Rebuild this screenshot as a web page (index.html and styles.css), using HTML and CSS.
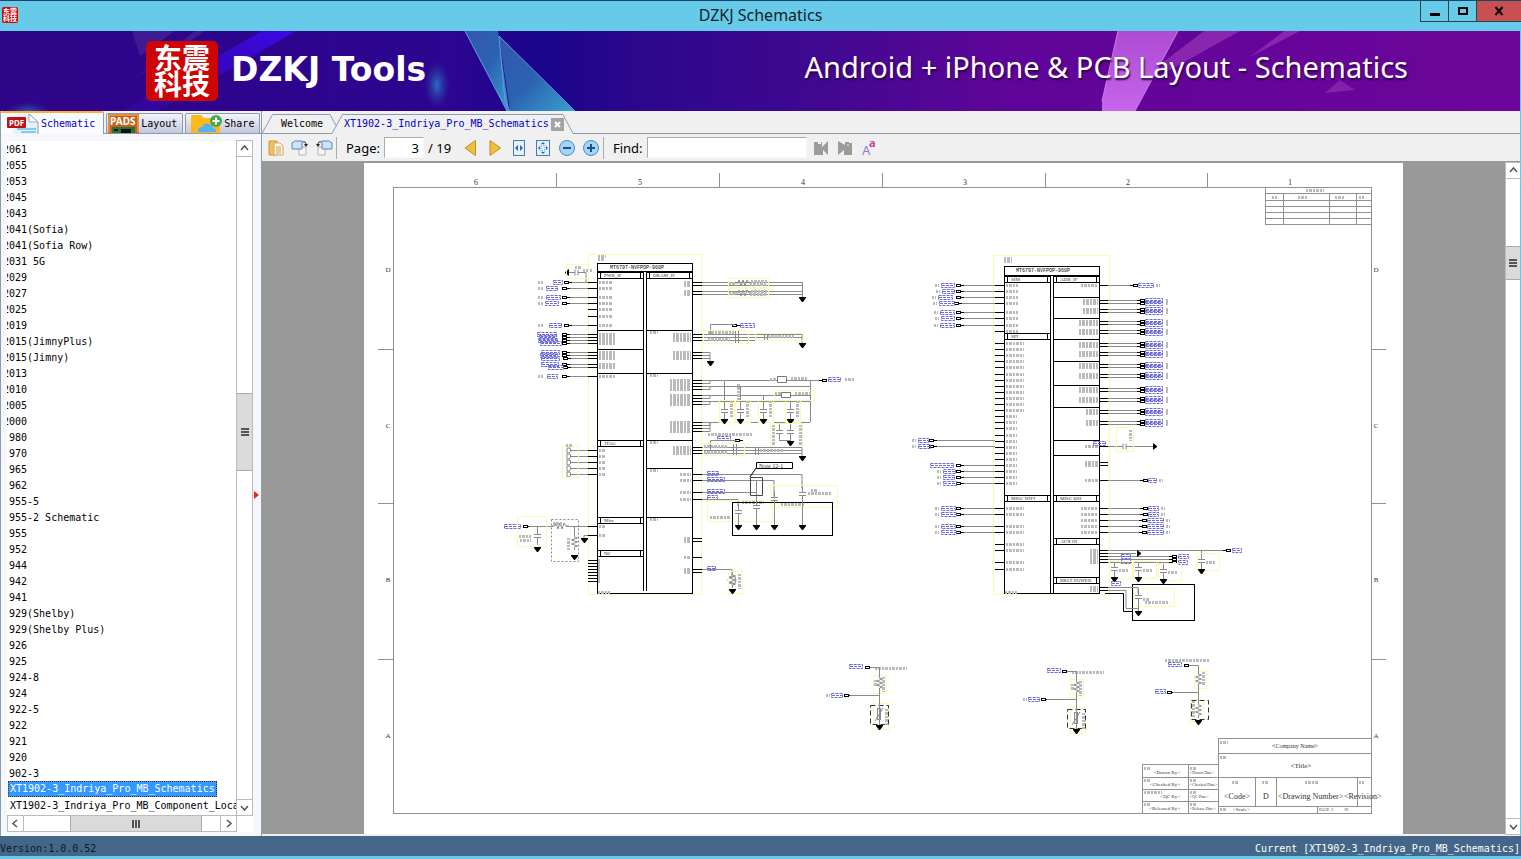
FILE: index.html
```
<!DOCTYPE html>
<html lang="en">
<head>
    <meta charset="UTF-8">
    <meta name="viewport" content="width=device-width, initial-scale=1.0">
    <title>DZKJ Schematics</title>
    <link rel="stylesheet" href="styles.css">
</head>
<body>

<!-- Title bar -->
<header class="titlebar">
    <div class="app-icon" aria-hidden="true"><span>东震</span><span>科技</span></div>
    <h1 class="window-title">DZKJ Schematics</h1>
    <div class="window-buttons">
        <button type="button" aria-label="Minimize"><svg width="12" height="12"><path d="M1 9.5h10" stroke="#000" stroke-width="3"/></svg></button>
        <button type="button" aria-label="Maximize"><svg width="12" height="12"><path d="M2 3h8v6H2z" fill="none" stroke="#000" stroke-width="2"/></svg></button>
        <button type="button" class="close" aria-label="Close"><svg width="12" height="12"><path d="M2.500 2l7 8M9.500 2l-7 8" stroke="#000" stroke-width="2"/></svg></button>
    </div>
</header>

<!-- Banner -->
<div class="banner">
    <svg class="banner-art" viewBox="0 0 1520 80" preserveAspectRatio="none" aria-hidden="true">
        <defs>
            <linearGradient id="bg">
                <stop offset="0" stop-color="#2f0588"/>
                <stop offset=".3" stop-color="#2c0590"/>
                <stop offset=".355" stop-color="#19058a"/>
                <stop offset=".42" stop-color="#2c078c"/>
                <stop offset=".54" stop-color="#400890"/>
                <stop offset=".66" stop-color="#5f0599"/>
                <stop offset="1" stop-color="#6d059a"/>
            </linearGradient>
            <linearGradient id="blue" x1="0" y1="0" x2="1" y2="1">
                <stop offset="0" stop-color="#3457ad"/>
                <stop offset=".5" stop-color="#2b62b2"/>
                <stop offset="1" stop-color="#3aa0cc"/>
            </linearGradient>
            <linearGradient id="ray" x1="1" y1="0" x2="0" y2="1">
                <stop offset="0" stop-color="#3c08ea"/>
                <stop offset="1" stop-color="#3408a4" stop-opacity=".5"/>
            </linearGradient>
            <linearGradient id="pink" x1="0" y1="0" x2="0" y2="1">
                <stop offset="0" stop-color="#ad4cd2"/>
                <stop offset="1" stop-color="#c565ec"/>
            </linearGradient>
            <radialGradient id="glow">
                <stop offset="0" stop-color="#2a6cc0"/>
                <stop offset="1" stop-color="#2a3ca0" stop-opacity="0"/>
            </radialGradient>
        </defs>
        <path d="M0 0h1520v80H0z" fill="url(#bg)"/>
        <path d="M132 0h43l-35 25zM195 0h10l-70 47z" fill="#50309c" opacity=".5"/>
        <path d="M262 0h34L158 80h-36z" fill="url(#ray)"/>
        <ellipse cx="28" cy="82" rx="24" ry="11" fill="url(#glow)"/>
        <ellipse cx="437" cy="54" rx="13" ry="24" fill="url(#glow)"/>
        <path d="M465 0h33l11 80h-2z" fill="url(#blue)"/>
        <path d="M499 5l76 75h-65z" fill="url(#blue)"/>
        <path d="M465 0l42 80M499 5l6 65 5 10M499 5l76 75" fill="none" stroke="#629be8"/>
        <path d="M1118 0h60l-43 80h-33v-10z" fill="url(#pink)"/>
        <path d="M1204 0h36l-72 40-10-5zM1284 0h16l-50 26z" fill="#9735b9" opacity=".7"/>
        <path d="M1340 49l15 10-30 3z" fill="#8f2db0" opacity=".7"/>
        <path d="M1118 0l-16 70M1178 0l-43 80" stroke="#d278e5" fill="none"/>
    </svg>
    <div class="logo"><span>东震</span><span>科技</span></div>
    <div class="brand">DZKJ Tools</div>
    <div class="slogan">Android + iPhone &amp; PCB Layout - Schematics</div>
</div>

<main class="workspace">
    <!-- Left panel -->
    <aside class="sidebar">
        <nav class="side-tabs">
            <button type="button" class="side-tab active">
                <svg width="32" height="20" viewBox="0 0 32 20" aria-hidden="true"><path d="M6 0h17l8 8v12H6z" fill="#e4f2fb"/><path d="M22 0l9 8v12" fill="none" stroke="#8b9dab"/><path d="M22 0v8h9z" fill="#fff" stroke="#9aabb7"/><path d="M10 15h19M14 18h15" stroke="#8cc8ec" stroke-width="2"/><rect y="3" width="19" height="11" rx="1" fill="#bd1118"/><text x="2" y="12" class="icon-pdf">PDF</text></svg>
                Schematic
            </button>
            <button type="button" class="side-tab">
                <svg width="31" height="19" viewBox="0 0 31 19" aria-hidden="true"><path d="M0 0h31v19H0z" fill="#c75f16"/><path d="M1 18V1h29v17" fill="none" stroke="#ffbd73"/><path d="M4 13h23v6H4z" fill="#247432"/><path d="M6 15h4v2H6zM13 15h10v4H13z" fill="#111"/><text x="2" y="11" class="icon-pads">PADS</text></svg>
                Layout
            </button>
            <button type="button" class="side-tab share">
                <svg width="32" height="19" viewBox="0 0 32 19" aria-hidden="true"><path d="M1 3q0-2 2-2h8l3 3h14q2 0 2 2v13H1z" fill="#fdb918"/><path d="M8 17q0-4 4-4 2-5 7-3 3 0 4 4 4 1 3 4H8z" fill="#55b2f2"/><circle cx="26" cy="7" r="6" fill="#45a84b"/><path d="M22.500 7h7M26 3.500v7" stroke="#fff" stroke-width="2"/></svg>
                Share
            </button>
        </nav>
        <div class="tree-panel">
            <ul class="tree" id="tree"></ul>
            <div class="vbar">
                <button type="button" aria-label="Scroll up"><svg width="9" height="9"><path d="M1 6l3.500-4L8 6" class="arrow"/></svg></button>
                <div class="track"><div class="thumb"><i></i></div></div>
                <button type="button" aria-label="Scroll down"><svg width="9" height="9"><path d="M1 3l3.500 4L8 3" class="arrow"/></svg></button>
            </div>
            <div class="hbar">
                <button type="button" aria-label="Scroll left"><svg width="9" height="9"><path d="M6 1L2 4.500 6 8" class="arrow"/></svg></button>
                <div class="track"><div class="thumb"><i></i></div></div>
                <button type="button" aria-label="Scroll right"><svg width="9" height="9"><path d="M3 1l4 3.500L3 8" class="arrow"/></svg></button>
            </div>
        </div>
        <span class="splitter" aria-hidden="true"></span>
    </aside>

    <!-- Document area -->
    <section class="viewer">
        <nav class="doc-tabs">
            <button type="button" class="doc-tab welcome">
                <svg class="tab-edge" viewBox="0 0 80 20" aria-hidden="true"><path d="M0 19.500L10.500.5H68l6 11"/></svg>
                <span>Welcome</span>
            </button>
            <div class="doc-tab current">
                <svg class="tab-edge" viewBox="0 0 243 20" aria-hidden="true"><path d="M0 19.500L10.500.5H231l10 19"/></svg>
                <button type="button" class="doc-name">XT1902-3_Indriya_Pro_MB_Schematics</button>
                <button type="button" class="tab-close" aria-label="Close tab"><svg width="7" height="7"><path d="M1 1l5 5M6 1L1 6" stroke="#fff" stroke-width="2"/></svg></button>
            </div>
            <span class="strip-line"></span>
        </nav>

        <div class="toolbar">
            <button type="button" class="tool" aria-label="Open"><svg width="16" height="16"><path d="M1 1h8v14H1z" fill="#efbf62" stroke="#cc9637"/><path d="M6 3h6l3 3v9H6z" fill="#fff8df" stroke="#d0a961"/><path d="M8 7h5M8 9h5M8 11h5M8 13h5" stroke="#c8a05a"/></svg></button>
            <button type="button" class="tool" aria-label="Rotate right"><svg width="18" height="16"><path d="M8 7h7v8H8z" fill="#f8f8f8" stroke="#b3b3b3"/><path d="M1 3l3-2h7v8H1z" fill="#cfe3f8" stroke="#5b86b6"/><path d="M12 2q3-1 3 3" fill="none" stroke="#222"/><path d="M13 4h4l-2 3z" fill="#222"/></svg></button>
            <button type="button" class="tool" aria-label="Rotate left"><svg width="18" height="16"><path d="M3 7h7v8H3z" fill="#f8f8f8" stroke="#b3b3b3"/><path d="M7 1h7l3 2v6H7z" fill="#cfe3f8" stroke="#5b86b6"/><path d="M6 2q-3-1-3 3" fill="none" stroke="#222"/><path d="M1 4h4L3 7z" fill="#222"/></svg></button>
            <span class="sep"></span>
            <label for="page">Page:</label>
            <input type="text" id="page" value="3">
            <span class="total">/ 19</span>
            <button type="button" class="tool" aria-label="Previous page"><svg width="14" height="16"><path d="M11.500.5v15L1 8z" fill="#f0bf3d" stroke="#bd8d24"/></svg></button>
            <button type="button" class="tool" aria-label="Next page"><svg width="14" height="16"><path d="M2 .5v15L12.500 8z" fill="#f0bf3d" stroke="#bd8d24"/></svg></button>
            <button type="button" class="tool" aria-label="Fit width"><svg width="14" height="16"><rect x="1.500" y=".5" width="11" height="15" fill="#e4f1fe" stroke="#457cb3"/><path d="M6 5v6L3 8zM8 5v6l3-3z" fill="#2769b0"/></svg></button>
            <button type="button" class="tool" aria-label="Fit page"><svg width="14" height="16"><rect x=".5" y=".5" width="13" height="15" fill="#e4f1fe" stroke="#457cb3"/><path d="M7 2l2 2H5zM7 14l2-2H5zM2 8l2-2v4zM12 8l-2-2v4z" fill="#2769b0"/><path d="M5 5h4v6H5z" fill="none" stroke="#6a9acb" stroke-dasharray="1 1"/></svg></button>
            <button type="button" class="tool" aria-label="Zoom out"><svg width="16" height="16"><circle cx="8" cy="8" r="7.500" fill="#a5d5f5" stroke="#4a8bbf"/><path d="M4 8h8" stroke="#14548f" stroke-width="2"/></svg></button>
            <button type="button" class="tool" aria-label="Zoom in"><svg width="16" height="16"><circle cx="8" cy="8" r="7.500" fill="#a5d5f5" stroke="#4a8bbf"/><path d="M4 8h8M8 4v8" stroke="#14548f" stroke-width="2"/></svg></button>
            <span class="sep"></span>
            <label for="find">Find:</label>
            <input type="text" id="find">
            <button type="button" class="tool" aria-label="Find previous"><svg width="16" height="16"><path d="M1 2h4v2h3V2h1v5l6-6v14l-5-5v5H1z" fill="#9b9b9b"/></svg></button>
            <button type="button" class="tool" aria-label="Find next"><svg width="16" height="16"><path d="M15 3h-3V2H8v3L1 1v14l6-5v5h8z" fill="#9b9b9b"/><path d="M10 5h2" stroke="#eee"/></svg></button>
            <button type="button" class="tool" aria-label="Match case"><svg width="16" height="16"><text x="1" y="15" class="case-big">A</text><text x="8" y="7" class="case-small">a</text></svg></button>
        </div>

        <div class="canvas">
            <div class="page-wrap">
                <svg class="sheet" id="sheet" viewBox="364 163 1039 671" role="img" aria-label="Schematic page 3"></svg>
            </div>
            <div class="vbar">
                <button type="button" aria-label="Page up"><svg width="9" height="9"><path d="M1 6l3.500-4L8 6" class="arrow"/></svg></button>
                <div class="track"><div class="thumb"><i></i></div></div>
                <button type="button" aria-label="Page down"><svg width="9" height="9"><path d="M1 3l3.500 4L8 3" class="arrow"/></svg></button>
            </div>
        </div>
    </section>
</main>

<footer class="statusbar">
    <span class="version">Version:1.0.0.52</span>
    <span>Current [XT1902-3_Indriya_Pro_MB_Schematics]</span>
</footer>

<script src="script.js"></script>
</body>
</html>
```
FILE: styles.css
```
* {
    box-sizing: border-box;
}
body {
    margin: 0;
    height: 100vh;
    display: flex;
    flex-direction: column;
    overflow: hidden;
    background: #66cae8;
    font-family: "DejaVu Sans Mono", "Liberation Mono", monospace;
    font-size: 10px;
    line-height: 18px;
    color: #000;
    border-bottom: 3px solid #66cae8;
}
button {
    font: inherit;
    color: inherit;
    padding: 0;
    border: 0;
    background: none;
}
svg {
    display: block;
    flex: none;
}

/* title bar */
.titlebar {
    flex: none;
    height: 31px;
    display: grid;
    grid-template-columns: 120px 1fr 120px;
    border-top: 1px solid #17476b;
}
.app-icon,
.logo {
    display: flex;
    flex-direction: column;
    align-items: center;
    justify-content: center;
    background: #cd0505;
    color: #fff;
    font-family: "Noto Sans CJK SC", sans-serif;
    font-weight: bold;
}
.app-icon {
    width: 16px;
    height: 16px;
    margin: 6px 2px;
    border-radius: 2px;
    font-size: 7px;
    line-height: 7px;
}
.window-title {
    margin: 0;
    text-align: center;
    font-family: "Noto Sans", sans-serif;
    font-size: 16px;
    font-weight: normal;
    line-height: 28px;
    color: #10242c;
}
.window-buttons {
    display: flex;
    justify-content: flex-end;
    height: 21px;
}
.window-buttons button {
    width: 28px;
    display: flex;
    align-items: center;
    justify-content: center;
    border: 1px solid #24444f;
    border-width: 0 0 1px 1px;
}
.window-buttons .close {
    width: 45px;
    background: #c75050;
}

/* banner */
.banner {
    position: relative;
    flex: none;
    height: 80px;
    margin-right: 1px;
    padding: 0 112px 0 146px;
    display: flex;
    align-items: center;
    color: #fff;
    background: #4d0793;
}
.banner-art {
    position: absolute;
    left: 0;
    top: 0;
    width: 100%;
    height: 100%;
}
.logo {
    position: relative;
    width: 72px;
    height: 60px;
    margin-right: 13px;
    padding-bottom: 2px;
    border-radius: 5px;
    font-size: 28px;
    line-height: 26px;
}
.brand {
    position: relative;
    padding-bottom: 2px;
    font-family: "DejaVu Sans", sans-serif;
    font-size: 33px;
    font-weight: bold;
    line-height: 40px;
}
.slogan {
    position: relative;
    margin-left: auto;
    padding-bottom: 8px;
    font-family: "Noto Sans", sans-serif;
    font-size: 29px;
    line-height: 36px;
    text-shadow: 1px 2px 2px #2b0048;
}

/* main area */
.workspace {
    flex: 1;
    min-height: 0;
    display: flex;
    margin-right: 1px;
    background: #f0f0f0;
}
.sidebar {
    position: relative;
    flex: none;
    width: 262px;
    display: flex;
    flex-direction: column;
    border-left: 1px solid #8b9dad;
    border-right: 1px solid #8b9dad;
    background: #f5f7fb;
}
.side-tabs {
    flex: none;
    height: 23px;
    display: flex;
    align-items: flex-end;
    gap: 2px;
    background: #f0f0f0;
    border-bottom: 1px solid #8b9dad;
}
.side-tab {
    height: 20px;
    padding: 0 5px 0 1px;
    display: flex;
    align-items: center;
    gap: 2px;
    border: 1px solid #8b9dad;
    border-bottom: 0;
    border-radius: 2px 2px 0 0;
    background: linear-gradient(#f4f4fb, #c5c6de);
}
.side-tab.share {
    padding-left: 4px;
}
.side-tab.active {
    height: 23px;
    margin-bottom: -1px;
    padding: 0 8px 0 6px;
    color: #0000c8;
    background: #fafbfe;
    border: 0;
    border-top: 2px solid #ffae33;
    border-right: 1px solid #8b9dad;
}
.icon-pdf {
    font: bold 8px "Noto Sans", sans-serif;
    fill: #fff;
}
.icon-pads {
    font: bold 10px "Noto Sans", sans-serif;
    fill: #fff;
}
.tree-panel {
    flex: 1;
    min-height: 0;
    display: grid;
    grid-template-columns: 1fr 17px;
    grid-template-rows: 1fr 17px;
    margin: 7px 8px 4px 6px;
    background: #fff;
}
.tree {
    min-height: 0;
    margin: 0;
    padding: 0;
    list-style: none;
    overflow: hidden;
    white-space: nowrap;
}
.tree a {
    display: block;
    height: 16px;
    padding-left: 2px;
    color: #000;
    text-decoration: none;
}
.tree .scrolled {
    text-indent: -6px;
}
.tree .file {
    padding-left: 3px;
}
.tree .selected {
    width: 209px;
    margin-left: 1px;
    padding-left: 1px;
    line-height: 14px;
    color: #fff;
    background: #3399ff;
    border: 1px dotted #46301a;
}

/* scroll bars */
.vbar,
.hbar {
    display: flex;
    background: #fff;
}
.vbar {
    flex-direction: column;
    border: 1px solid #bbb;
    border-width: 0 1px;
}
.hbar {
    margin-left: 1px;
    border: 1px solid #bbb;
    border-width: 1px 0;
}
.vbar button,
.hbar button {
    flex: none;
    width: 15px;
    height: 15px;
    display: flex;
    align-items: center;
    justify-content: center;
    outline: 1px solid #bbb;
}
.track {
    flex: 1;
    display: flex;
}
.vbar .track {
    flex-direction: column;
    padding-top: 237px;
}
.hbar .track {
    padding-left: 47px;
}
.thumb {
    display: flex;
    align-items: center;
    justify-content: center;
    background: #dadada;
    border: 1px solid #aaa;
}
.vbar .thumb {
    height: 78px;
    border-width: 1px 0;
}
.hbar .thumb {
    width: 132px;
    border-width: 0 1px;
}
.thumb i {
    width: 8px;
    height: 8px;
    background: repeating-linear-gradient(#555 0 2px, transparent 2px 3px);
}
.hbar .thumb i {
    background: repeating-linear-gradient(90deg, #555 0 2px, transparent 2px 3px);
}
.arrow {
    fill: none;
    stroke: #555;
    stroke-width: 1.500;
}
.splitter {
    position: absolute;
    right: 2px;
    top: 380px;
    border: 4px solid transparent;
    border-left: 5px solid #e0281c;
    border-right: 0;
}

/* document tabs */
.viewer {
    flex: 1;
    min-width: 0;
    display: flex;
    flex-direction: column;
}
.doc-tabs {
    flex: none;
    height: 23px;
    display: flex;
    align-items: flex-end;
}
.doc-tab {
    position: relative;
    height: 20px;
    display: flex;
    align-items: center;
}
.doc-tab.welcome {
    width: 70px;
    padding-left: 19px;
    border-bottom: 1px solid #8b9dad;
}
.doc-tab.current {
    width: 241px;
    padding-left: 12px;
    gap: 2px;
    color: #0000c8;
}
.doc-tab span,
.doc-name,
.tab-close {
    position: relative;
}
.tab-edge {
    position: absolute;
    left: 0;
    top: 0;
    height: 20px;
    fill: none;
    stroke: #8b9dad;
}
.tab-close {
    width: 13px;
    height: 13px;
    display: flex;
    align-items: center;
    justify-content: center;
    background: #a3a3a3;
}
.strip-line {
    flex: 1;
    border-bottom: 1px solid #8b9dad;
}

/* toolbar */
.toolbar {
    flex: none;
    height: 29px;
    padding-left: 2px;
    display: flex;
    align-items: center;
    font-family: "Noto Sans", sans-serif;
    font-size: 13px;
    border-bottom: 2px solid #999;
}
.tool {
    width: 24px;
    height: 24px;
    display: flex;
    align-items: center;
    justify-content: center;
}
.sep {
    width: 1px;
    height: 22px;
    background: #aaa;
}
.toolbar label {
    padding: 0 4px 0 9px;
}
.toolbar input {
    height: 21px;
    padding: 0 4px;
    border: 1px solid #aaa;
    border-right-color: #f8f8f8;
    border-bottom-color: #f8f8f8;
    font: inherit;
    background: #fff;
}
#page {
    width: 40px;
    text-align: right;
}
#find {
    width: 160px;
    margin-right: 2px;
}
.total {
    width: 35px;
    padding-left: 4px;
}
.case-big {
    font: 13px "Noto Sans", sans-serif;
    fill: #8c7be8;
}
.case-small {
    font: bold 11px "Noto Sans", sans-serif;
    fill: #cd3da0;
}

/* page */
.canvas {
    flex: 1;
    min-height: 0;
    display: flex;
    margin-bottom: 2px;
    background: #999;
}
.page-wrap {
    flex: 1;
    min-width: 0;
    display: flex;
    justify-content: center;
    overflow: hidden;
}
.canvas .vbar {
    width: 15px;
    border-right: 0;
}
.canvas .vbar .track {
    padding-top: 68px;
}
.canvas .vbar .thumb {
    height: 34px;
}
.sheet {
    width: 1039px;
    height: 671px;
    background: #fff;
}
.sheet text {
    font-family: "Liberation Serif", serif;
    fill: #333;
}
.sheet .part {
    font-family: "Liberation Mono", monospace;
    font-size: 5px;
    fill: #000;
}
.chip {
    fill: none;
    stroke: #000;
}
.wire {
    fill: none;
    stroke: #8a8a8a;
}
.frame {
    fill: none;
    stroke: #909090;
}
.halo {
    fill: none;
    stroke: #fafab0;
}
.pin {
    stroke: #000;
}
.tiny {
    stroke: #bababa;
    stroke-width: 3;
    stroke-dasharray: 2 1 3 1;
}
.net {
    fill: none;
    stroke: #6c6cd8;
    stroke-dasharray: 3 1;
}
.port {
    fill: #fff;
    stroke: #000;
}

/* status bar */
.statusbar {
    flex: none;
    height: 20px;
    padding: 4px 1px 0 0;
    display: flex;
    justify-content: space-between;
    color: #fff;
    background: #446688;
}
.version {
    color: #101820;
}
```
FILE: script.js
```
// file list
const folders = ['2061', '2055', '2053', '2045', '2043', '2041(Sofia)', '2041(Sofia Row)', '2031 5G',
    '2029', '2027', '2025', '2019', '2015(JimnyPlus)', '2015(Jimny)', '2013', '2010', '2005', '2000',
    '980', '970', '965', '962', '955-5', '955-2 Schematic', '955', '952', '944', '942', '941',
    '929(Shelby)', '929(Shelby Plus)', '926', '925', '924-8', '924', '922-5', '922', '921', '920', '902-3'];
const files = ['XT1902-3_Indriya_Pro_MB_Schematics', 'XT1902-3_Indriya_Pro_MB_Component_Location'];

let rows = '';
for (const name of folders) {
    rows += `<li><a href="#"${name[0] === '2' ? ' class="scrolled"' : ''}>${name}</a></li>`;
}
files.forEach((name, i) => {
    rows += `<li><a href="#" class="file${i === 0 ? ' selected' : ''}">${name}</a></li>`;
});
document.getElementById('tree').innerHTML = rows;

// schematic
let out = '';
const path = (cls, d) => { out += `<path class="${cls}" d="${d}"/>`; };
const box = (cls, x, y, w, h) => { out += `<rect class="${cls}" x="${x + 0.5}" y="${y + 0.5}" width="${w}" height="${h}"/>`; };
const h = (cls, x1, x2, y) => path(cls, `M${x1} ${y + 0.5}H${x2}`);
const v = (cls, x, y1, y2) => path(cls, `M${x + 0.5} ${y1}V${y2}`);
const tiny = (x, y, w) => h('tiny', x, x + w, y);
const text = (x, y, size, str, anchor = 'start') => {
    out += `<text x="${x}" y="${y}" font-size="${size}" text-anchor="${anchor}">${str.replace(/</g, '&lt;')}</text>`;
};
const net = (x, y, w) => { box('net', x, y - 2, w, 4); h('net', x + 1, x + w, y); };
const port = (x, y) => {
    box('port', x - 3, y - 1, 4, 2);
    h('pin', x + 2, x + 5, y);
};
const portLeft = (x, y) => {
    box('port', x - 1, y - 1, 4, 2);
    h('pin', x - 4, x - 1, y);
};
const gnd = (x, y) => { out += `<path d="M${x - 3} ${y}h7v1l-3 4h-1l-3 -4z"/>`; };
const gndSide = (x, y, dir) => { out += `<path d="M${x} ${y - 3}v7l${4 * dir} -3v-1z"/>`; };
const cap = (x, y) => {
    path('wire', `M${x + 0.5} ${y - 8}v6M${x - 3} ${y - 1.5}h7M${x - 3} ${y + 1.5}h7M${x + 0.5} ${y + 2}v7`);
};
const res = (x, y) => path('wire', `M${x + 0.5} ${y - 8}v3l3 1-6 2 6 2-6 2 6 2-3 1v3`);
const resFlat = (x, y) => path('wire', `M${x - 8} ${y}h3l1-3 2 6 2-6 2 6 2-6 2 3h3`);
const bar = (x, y, w, label) => {
    box('chip', x, y, w, 6);
    v('chip', x + 3, y, y + 6);
    v('chip', x + w - 3, y, y + 6);
    text(x + 7, y + 5, 5, label);
};

// sheet frame with zones
box('frame', 393, 187, 978, 626);
[556, 719, 882, 1045, 1207].forEach(x => v('frame', x, 173, 187));
[349, 503, 659].forEach(y => { h('frame', 378, 393, y); h('frame', 1371, 1386, y); });
[476, 640, 803, 965, 1128, 1290].forEach((x, i) => text(x, 185, 8, String(6 - i), 'middle'));
[272, 428, 582, 738].forEach((y, i) => {
    text(388, y, 7, 'DCBA'[i], 'middle');
    text(1376, y, 7, 'DCBA'[i], 'middle');
});

// revision table
box('frame', 1265, 187, 106, 37);
[193, 200, 206, 212, 218].forEach(y => h('frame', 1265, 1371, y));
[1283, 1329, 1356].forEach(x => v('frame', x, 193, 224));
tiny(1306, 190, 18);
tiny(1272, 197, 5);
tiny(1298, 197, 10);
tiny(1335, 197, 10);
tiny(1359, 197, 5);

// left chip
box('halo', 588, 254, 113, 340);
tiny(598, 256, 8);
tiny(598, 259, 7);
box('chip', 597, 263, 95, 330);
h('chip', 597, 692, 271);
v('chip', 643, 271, 591);
v('chip', 646, 271, 591);
out += '<text class="part" x="610" y="269">MT6797-NVFPOP-960P</text>';
bar(597, 272, 46, 'PWR_IF');
bar(646, 272, 46, 'DRAM_IF');
bar(597, 440, 46, 'JTAG');
bar(597, 517, 46, 'Misc');
bar(597, 550, 46, 'NC');
[330, 349, 373].forEach(y => h('chip', 597, 643, y));
[330, 373, 440, 468, 517].forEach(y => h('chip', 646, 692, y));
[332, 375, 442, 470, 519].forEach(y => tiny(650, y, 8));
tiny(598, 592, 12);

[282, 288, 297, 303, 309, 316, 325, 334, 337, 340, 343, 352, 355, 358, 364, 367, 376, 450, 456, 462, 468, 474, 526, 535]
    .forEach(y => { h('pin', 588, 597, y); tiny(599, y, y < 330 ? 13 : y < 400 ? 16 : 7); });
[560, 563, 566, 569, 572, 575, 578, 581].forEach(y => { h('pin', 588, 597, y); tiny(598, y, 3); });
[[567, 282, 553, 9], [565, 288, 546, 11], [565, 297, 546, 14], [565, 303, 545, 13], [567, 325, 549, 12],
    [565, 334, 537, 19], [565, 337, 539, 17], [565, 340, 538, 19], [565, 343, 540, 21], [565, 352, 541, 18],
    [565, 355, 540, 17], [566, 358, 541, 18], [565, 364, 541, 17], [566, 367, 548, 15], [565, 376, 547, 10]]
    .forEach(([x, y, nx, w]) => {
        h('wire', x + 3, 588, y);
        port(x, y);
        net(nx, y, w);
    });
[282, 288, 297, 303, 325, 376].forEach(y => tiny(538, y, 5));
gndSide(569, 272, -1);
path('wire', 'M569 272.500h6m0-3v6m3-6v6m0-3h8v10');
tiny(575, 267, 6);
tiny(583, 270, 9);
box('halo', 566, 264, 22, 14);
[450, 456, 462, 468, 474].forEach(y => {
    h('wire', 570, 588, y);
    path('wire', `M567 ${y - 2}h3l1 3-2 2h-2z`);
});
box('halo', 562, 446, 16, 31);
tiny(566, 445, 6);

// misc network on the left
net(504, 526, 16);
port(526, 526);
path('wire', 'M529 526.500h24m13 0h22');
resFlat(560, 526);
cap(537, 536);
v('wire', 537, 527, 530);
gnd(537, 547);
tiny(519, 536, 12);
tiny(520, 540, 11);
box('halo', 517, 516, 29, 30);
out += '<path d="M551.500 519.500h27v42h-27z" fill="none" stroke="#888" stroke-dasharray="2 2"/>';
v('wire', 574, 527, 535);
res(574, 542);
gnd(574, 555);
tiny(553, 523, 10);
v('tiny', 568, 538, 550);
path('wire', 'M588 535.500h-4v3');
gnd(584, 538);

// right side pins of the left chip
[282, 285, 291, 294, 334, 337, 340, 352, 355, 358, 380, 383, 386, 389, 395, 398, 401, 404, 422, 425, 428, 431,
    447, 450, 453, 474, 480, 492, 499, 538, 541, 557, 569, 572]
    .forEach(y => {
        h('pin', 692, 702, y);
        const w = y < 300 ? 7 : y < 374 ? 18 : y < 440 ? 21 : y < 460 ? 18 : y < 500 ? 11 : 7;
        tiny(691 - w, y, w);
    });
[282, 285, 291, 294].forEach(y => h('wire', 702, 802, y));
v('wire', 802, 282, 297);
gnd(802, 297);
[283, 293].forEach(y => {
    resFlat(743, y);
    box('halo', 728, y - 5, 40, 9);
    tiny(729, y, 6);
    tiny(751, y - 2, 16);
    tiny(750, y + 1, 16);
});
port(735, 325);
net(740, 325, 14);
path('wire', 'M702 334.500h100v9M702 337.500h100M702 340.500h100M710.500 334v-9.500h24');
gnd(802, 343);
tiny(708, 332, 26);
tiny(708, 339, 22);
tiny(768, 336, 26);
path('wire', 'M735.500 330v14m3-14v14M764.500 333v7m3-7v7');
box('halo', 703, 330, 45, 13);
box('halo', 755, 333, 48, 7);
path('wire', 'M702 352.500h8v9M702 355.500h8M702 358.500h8');
gnd(710, 361);

path('wire', 'M702 380.500h120M702 383.500h8v-3M702 386.500h108M702 389.500h8v-3M702 395.500h108M702 398.500h8v-3M702 401.500h108M702 404.500h8v-3M810.500 380v42M702 422.500h108M702 425.500h8v-3M702 428.500h8M702 431.500h8v-9');
out += '<path d="M777.500 376.500h9v6h-9zM781.500 392.500h9v5h-9z" fill="#fff" stroke="#777"/>';
tiny(770, 379, 6);
tiny(791, 378, 17);
tiny(775, 393, 6);
tiny(795, 393, 16);
box('halo', 774, 390, 40, 10);
portLeft(823, 380);
net(828, 379, 12);
tiny(845, 379, 9);
[[724, 380], [740, 387], [763, 395], [790, 401]].forEach(([x, y]) => {
    v('wire', x, y, 403);
    cap(x, 411);
    v('tiny', x + 7, 401, 418);
    box('halo', x - 5, 400, 15, 22);
    gnd(x, 419);
});
v('tiny', 738, 384, 402);
cap(779, 432);
cap(790, 432);
path('wire', 'M779 440.500h11');
gnd(790, 441);
v('tiny', 773, 425, 446);
v('tiny', 800, 425, 446);
box('halo', 770, 423, 32, 24);
net(717, 438, 13);
port(738, 440);
tiny(708, 434, 44);
path('wire', 'M702 447.500h100v9M702 450.500h100M702 453.500h100M710.500 450v-9.500h26M733.500 443v13m3-13v13M755.500 447v8m3-8v8');
gnd(802, 456);
tiny(704, 446, 23);
tiny(704, 452, 23);
tiny(760, 450, 24);
box('halo', 703, 443, 41, 12);

// noted circuit
[[474, 11], [480, 17], [492, 17], [498, 10]].forEach(([y, w]) => net(707, y - 1, w));
path('wire', 'M702 474.500h100v14M702 480.500h72v16M702 492.500h54M702 499.500h36v7M756.500 480v20');
path('chip', 'M756.500 462.500h36v6h-36zM756 468l-6 9');
out += '<path d="M750.500 477.500h12v18h-12z" fill="none" stroke="#444"/>';
text(759, 468, 6, 'Note 12-1');
tiny(811, 490, 6);
tiny(808, 493, 23);
tiny(742, 502, 22);
tiny(781, 504, 24);
tiny(710, 517, 20);
box('halo', 770, 485, 67, 22);
box('halo', 707, 500, 65, 21);
box('chip', 732, 502, 100, 33);
[[738, 512], [756, 507], [774, 499], [802, 494]].forEach(([x, y]) => {
    cap(x, y);
    v('wire', x, y + 8, 527);
    gnd(x, 525);
});
net(707, 568, 8);
path('wire', 'M702 569.500h30v6');
res(732, 580);
out += '<circle class="wire" cx="732" cy="580" r="4"/>';
v('tiny', 739, 574, 589);
box('halo', 728, 571, 14, 22);
gnd(732, 589);

// right chip
box('halo', 993, 255, 116, 339);
tiny(1004, 258, 8);
tiny(1004, 261, 8);
box('chip', 1004, 266, 95, 327);
v('chip', 1050, 275, 593);
v('chip', 1053, 275, 593);
h('chip', 1004, 1099, 275);
out += '<text class="part" x="1016" y="272">MT6797-NVFPOP-960P</text>';
bar(1004, 276, 46, 'SIM');
bar(1053, 276, 46, 'ADB_IF');
bar(1004, 333, 46, 'SPI');
bar(1004, 495, 46, 'MISC WIFI');
bar(1053, 495, 46, 'MISC BSI');
bar(1053, 538, 46, 'AUX IN');
bar(1053, 577, 46, 'BKLT POWER');
[297, 318, 339, 361, 385, 407, 440, 455].forEach(y => h('chip', 1053, 1099, y));
tiny(1005, 592, 12);

const leftPins = [285, 291, 297, 303, 312, 318, 325, 331, 508, 514, 526, 532, 544, 550, 562, 569];
for (let i = 0; i < 24; i++) {
    leftPins.push(Math.round(343 + i * 6.1));
}
leftPins.forEach(y => {
    h('pin', 995, 1004, y);
    tiny(1006, y, y < 335 ? 12 : y > 500 ? 18 : y < 412 ? 18 : 11);
});
[[959, 285, 941, 13], [959, 291, 942, 12], [959, 297, 938, 14], [957, 303, 939, 15], [959, 312, 940, 14],
    [959, 318, 941, 13], [959, 325, 940, 14], [932, 440, 918, 10], [932, 446, 918, 12], [959, 465, 930, 23],
    [959, 471, 943, 12], [959, 477, 943, 11], [959, 483, 943, 13], [959, 508, 941, 14], [959, 514, 941, 15],
    [959, 526, 941, 14], [959, 532, 941, 15]]
    .forEach(([x, y, nx, w]) => {
        h('wire', x + 3, 995, y);
        port(x, y);
        net(nx, y, w);
        if (y !== 465) {
            tiny(nx - 6, y, 4);
        }
    });

[285, 300, 303, 309, 312, 321, 324, 330, 333, 343, 346, 352, 355, 364, 367, 374, 377, 388, 391, 398, 401, 410, 413,
    421, 424, 446, 462, 465, 480, 508, 514, 520, 526, 532, 550, 553, 556, 559, 562, 587, 590]
    .forEach(y => {
        h('pin', 1099, 1108, y);
        const w = y < 290 ? 17 : y < 318 ? 15 : y < 405 ? 19 : y < 430 ? 12 : y < 500 ? 13 : y < 540 ? 17 : 8;
        tiny(1098 - w, y, w);
    });
[300, 303, 309, 312, 321, 324, 330, 333, 343, 346, 352, 355, 364, 367, 374, 377, 388, 391, 398, 401, 410, 413, 421, 424]
    .forEach(y => {
        h('wire', 1108, 1140, y);
        portLeft(1141, y);
        net(1145, y, 17);
        tiny(1166, y, 3);
    });
[[1135, 285, 15], [1145, 480, 8], [1145, 508, 10], [1145, 514, 10], [1144, 520, 16], [1144, 526, 16], [1144, 532, 16]]
    .forEach(([x, y, w]) => {
        h('wire', 1108, x - 2, y);
        portLeft(x - 1, y);
        net(x + 3, y, w);
        tiny(x + w + 6, y, 4);
    });
net(1093, 443, 12);
path('wire', 'M1108 446.500h15m0-3v6m3-6v6m0-3h27');
gndSide(1153, 446, 1);
v('tiny', 1130, 430, 441);
box('halo', 1116, 427, 17, 24);

// power nets
path('wire', 'M1108 550.500h118M1108 553.500h28M1108 556.500h64M1108 559.500h64M1108 562.500h64M1201.500 550v6');
portLeft(1227, 550);
net(1232, 550, 9);
gndSide(1137, 553, 1);
[556, 559, 562].forEach(y => { portLeft(1173, y); });
net(1178, 556, 10);
net(1178, 562, 9);
net(1121, 556, 9);
net(1121, 561, 9);
[[1114, 569], [1138, 569], [1163, 571], [1201, 561]].forEach(([x, y]) => {
    cap(x, y);
    tiny(x + 5, y + 1, 10);
    box('halo', x - 5, y - 8, 23, 17);
    gnd(x, y + 8);
});
net(1111, 583, 9);
tiny(1143, 599, 6);
tiny(1145, 602, 24);
box('halo', 1133, 588, 41, 18);
box('chip', 1132, 584, 62, 36);
path('wire', 'M1108 587.500h30v6');
path('wire', 'M1108 590.500h18v18h12');
path('chip', 'M1105 593.500h18.500v18h9');
cap(1138, 597);
v('wire', 1138, 605, 611);
gnd(1138, 611);

// thermistor circuits
[[879, 667, 849, 695], [1076, 671, 1047, 699]].forEach(([x, y, nx, py]) => {
    box('halo', x - 6, y + 8, 13, 18);
    box('halo', x - 6, y + 36, 15, 26);
    tiny(x - 4, y + 1, 32);
    net(nx, y - 1, 13);
    port(x - 11, y);
    path('wire', `M${x - 9} ${y + 0.5}h9.500v8`);
    res(x, y + 16);
    v('wire', x, y + 24, y + 36);
    v('tiny', x + 4, y + 10, y + 25);
    v('tiny', x - 4, y + 13, y + 20);
    port(x - 32, py);
    h('wire', x - 29, x, py);
    net(x - 48, py, 11);
    tiny(x - 53, py, 4);
    out += `<path d="M${x - 8.5} ${y + 38.5}h18v19h-18z" fill="none" stroke="#333" stroke-dasharray="5 3"/>`;
    box('wire', x - 2, y + 41, 3, 11);
    path('wire', `M${x - 4} ${y + 54}l8-13M${x + 0.5} ${y + 36}v22`);
    v('tiny', x + 7, y + 42, y + 59);
    gnd(x, y + 58);
});
box('halo', 1194, 671, 12, 17);
box('halo', 1190, 699, 13, 22);
tiny(1165, 660, 44);
net(1168, 664, 13);
port(1187, 665);
path('wire', 'M1189 665.500h9.500v6');
res(1198, 679);
v('wire', 1198, 687, 703);
v('tiny', 1203, 672, 686);
net(1155, 691, 10);
port(1170, 692);
h('wire', 1173, 1198, 692);
out += '<path d="M1191.500 700.500h17v19h-17z" fill="none" stroke="#333" stroke-dasharray="5 3"/>';
res(1198, 710);
v('tiny', 1193, 701, 718);
gnd(1198, 720);

// title block
box('frame', 1218, 738, 153, 75);
[753, 777, 806].forEach(y => h('frame', 1218, 1371, y));
[1255, 1276, 1357].forEach(x => v('frame', x, 777, 806));
v('frame', 1317, 806, 813);
box('frame', 1142, 764, 76, 49);
[777, 789, 801].forEach(y => h('frame', 1142, 1218, y));
v('frame', 1188, 764, 813);
text(1295, 748, 6, '<Company Name>', 'middle');
text(1301, 768, 7, '<Title>', 'middle');
text(1237, 799, 8, '<Code>', 'middle');
text(1266, 799, 8, 'D', 'middle');
text(1278, 799, 8, '<Drawing Number>');
text(1344, 799, 8, '<Revision>');
['Drawn', 'Checked', 'QC', 'Released'].forEach((who, i) => {
    text(1180, 774 + i * 12, 5, `<${who} By>`, 'end');
    text(1190, 774 + i * 12, 4, `<${who === 'Released' ? 'Release' : who} Date>`);
    tiny(1144, 768 + i * 12, i === 2 ? 18 : 7);
    tiny(1190, 768 + i * 12, 7);
});
text(1233, 811, 5, '<Scale>');
text(1319, 811, 4, 'PAGE');
text(1331, 811, 4, '3');
text(1344, 811, 4, '19');
tiny(1220, 809, 6);
tiny(1220, 742, 8);
tiny(1220, 757, 6);
tiny(1232, 782, 6);
tiny(1262, 782, 6);
tiny(1305, 782, 14);
tiny(1359, 782, 5);

document.getElementById('sheet').innerHTML = out;
```
